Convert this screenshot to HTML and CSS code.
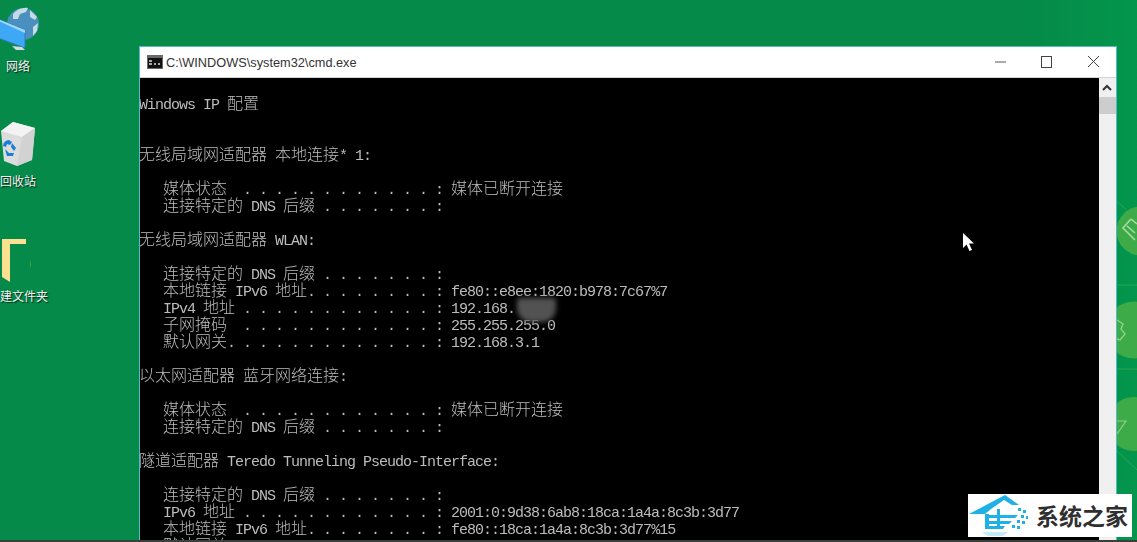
FILE: index.html
```html
<!DOCTYPE html>
<html lang="zh-CN">
<head>
<meta charset="utf-8">
<title>cmd.exe</title>
<link rel="stylesheet" href="styles.css">
</head>
<body>
<div class="desktop">
  <svg class="wallpaper" width="21" height="300" viewBox="1116 180 21 300">
    <path d="M1116 201l10 8M1116 285h21M1116 369h21M1116 450l21 20" stroke="#2fa552" stroke-width="1" fill="none"/>
    <circle cx="1141" cy="231" r="24.5" fill="#3dab48"/>
    <circle cx="1134" cy="330" r="28.5" fill="#3dab48"/>
    <circle cx="1134" cy="424" r="27" fill="#3dab48"/>
    <path d="M1131 219l-8 9 12 12M1131 219l6 5M1127 226l8 7" stroke="#a9dba2" stroke-width="1.6" fill="none"/>
    <path d="M1117 320l6 4-2 5 4 5-5 6-3-1" stroke="#8fd08a" stroke-width="1.4" fill="none"/>
    <path d="M1117 421h9l-9 13" stroke="#8fd08a" stroke-width="1.2" fill="none"/>
  </svg>

  <div class="desk-icon icon-network">
    <svg class="desk-glyph" width="80" height="46" viewBox="-22 6 80 46">
      <circle cx="23" cy="24" r="16" fill="#4a8fbd"/>
      <path d="M13 14c4-5 10-7 15-6l-2 4-6 2-2 5-5 0zM30 10l7 7-2 3-5-3zM33 27l5-4-1 8-4 5z" fill="#c5dbe6"/>
      <path d="M-6 19-2 19 25 30 25 48-2 38z" fill="#3ea8f7" stroke="#2b7bb4" stroke-width="1"/>
      <path d="M-6 19-2 19 25 30 25 33z" fill="#9fd6fa"/>
      <path d="M12 46l10 1 3 3H16z" fill="#d3dcde"/>
    </svg>
    <span class="desk-label">网络</span>
  </div>

  <div class="desk-icon icon-bin">
    <svg class="desk-glyph" width="80" height="46" viewBox="-22 121 80 46">
      <path d="M1 131 13 122 35 128 32 160 17 166 4 161z" fill="#dcdcdc"/>
      <path d="M1 131 13 122 35 128 22 137z" fill="#f3f3f3"/>
      <path d="M22 137 35 128 32 160 17 166z" fill="#d2d2d2"/>
      <path d="M3 146a6 6 0 0 1 6-6l3 2-2 3-3-1-1 3zM12 143l4 5-2 3-3-4zM5 149l4 4h5l-1 3H7z" fill="#1b7ed6"/>
    </svg>
    <span class="desk-label">回收站</span>
  </div>

  <div class="desk-icon icon-folder">
    <svg class="desk-glyph" width="80" height="46" viewBox="-22 238 80 46">
      <path d="M2 239H26V244H10V282L2 277z" fill="#fbe08f"/>
      <path d="M30 265l1-6v9z" fill="#4fae3c"/>
    </svg>
    <span class="desk-label">新建文件夹</span>
  </div>

  <section class="window">
    <header class="titlebar">
      <svg class="title-icon" width="16" height="14" viewBox="0 0 16 14">
        <rect width="16" height="14" fill="#6a6a6a"/>
        <rect x="1" y="3" width="14" height="10" fill="#111"/>
        <path d="M2 6h3M2 9h3M7 9h2M11 9h2" stroke="#ddd" stroke-width="1.4"/>
      </svg>
      <span class="title-text">C:\WINDOWS\system32\cmd.exe</span>
      <div class="controls">
        <svg width="47" height="32" viewBox="0 0 47 32"><path d="M20 16h11" stroke="#555" stroke-width="1"/></svg>
        <svg width="47" height="32" viewBox="0 0 47 32"><rect x="19.5" y="10.5" width="10" height="11" fill="none" stroke="#444" stroke-width="1"/></svg>
        <svg width="47" height="32" viewBox="0 0 47 32"><path d="M19 10l11 11M30 10 19 21" stroke="#444" stroke-width="1"/></svg>
      </div>
    </header>
    <div class="client">
      <div class="console">
        <div class="row"></div>
        <div class="row">Windows IP <span class="cjk">配置</span></div>
        <div class="row"></div>
        <div class="row"></div>
        <div class="row"><span class="cjk">无线局域网适配器</span> <span class="cjk">本地连接</span>* 1:</div>
        <div class="row"></div>
        <div class="row">   <span class="cjk">媒体状态</span>  . . . . . . . . . . . . : <span class="cjk">媒体已断开连接</span></div>
        <div class="row">   <span class="cjk">连接特定的</span> DNS <span class="cjk">后缀</span> . . . . . . . :</div>
        <div class="row"></div>
        <div class="row"><span class="cjk">无线局域网适配器</span> WLAN:</div>
        <div class="row"></div>
        <div class="row">   <span class="cjk">连接特定的</span> DNS <span class="cjk">后缀</span> . . . . . . . :</div>
        <div class="row">   <span class="cjk">本地链接</span> IPv6 <span class="cjk">地址</span>. . . . . . . . : fe80::e8ee:1820:b978:7c67%7</div>
        <div class="row">   IPv4 <span class="cjk">地址</span> . . . . . . . . . . . . : 192.168.</div>
        <div class="row">   <span class="cjk">子网掩码</span>  . . . . . . . . . . . . : 255.255.255.0</div>
        <div class="row">   <span class="cjk">默认网关</span>. . . . . . . . . . . . . : 192.168.3.1</div>
        <div class="row"></div>
        <div class="row"><span class="cjk">以太网适配器</span> <span class="cjk">蓝牙网络连接</span>:</div>
        <div class="row"></div>
        <div class="row">   <span class="cjk">媒体状态</span>  . . . . . . . . . . . . : <span class="cjk">媒体已断开连接</span></div>
        <div class="row">   <span class="cjk">连接特定的</span> DNS <span class="cjk">后缀</span> . . . . . . . :</div>
        <div class="row"></div>
        <div class="row"><span class="cjk">隧道适配器</span> Teredo Tunneling Pseudo-Interface:</div>
        <div class="row"></div>
        <div class="row">   <span class="cjk">连接特定的</span> DNS <span class="cjk">后缀</span> . . . . . . . :</div>
        <div class="row">   IPv6 <span class="cjk">地址</span> . . . . . . . . . . . . : 2001:0:9d38:6ab8:18ca:1a4a:8c3b:3d77</div>
        <div class="row">   <span class="cjk">本地链接</span> IPv6 <span class="cjk">地址</span>. . . . . . . . : fe80::18ca:1a4a:8c3b:3d77%15</div>
        <div class="row">   <span class="cjk">默认网关</span>. . . . . . . . . . . . . : ::</div>
      </div>
      <div class="scrollbar">
        <svg class="scroll-up" width="16" height="19" viewBox="0 0 16 19"><path d="M4 12l4-4 4 4" fill="none" stroke="#333" stroke-width="2"/></svg>
        <div class="thumb"></div>
      </div>
    </div>
  </section>

  <div class="smudge"></div>

  <svg class="cursor" width="14" height="20" viewBox="0 0 14 20">
    <path d="M1 1V16L4.5 12.5 7.5 19 10 18 7 11.5H12z" fill="#fff"/>
  </svg>

  <div class="watermark">
    <svg width="62" height="43" viewBox="0 0 62 43">
      <path d="M1 20 37 1 51 11H44L36 6 23 15 17 20z" fill="#1fb0e6"/>
      <path d="M17 20h4v15h-4zM29 15h3v20h-3z" fill="#1fb0e6"/>
      <path d="M21 21H50L47 24H21zM21 27H44L41 30H21zM21 32H37L35 35H21z" fill="#1fb0e6"/>
      <path d="M50 14h3v3h-3zM55 16h3v3h-3zM53 21h3v3h-3zM58 22h2v3h-2zM49 26h3v3h-3zM54 27h3v3h-3zM44 31h3v3h-3zM49 32h3v3h-3z" fill="#1fb0e6"/>
      <path d="M14 38h26l-5 4H20z" fill="#c4e9f7"/>
    </svg>
    <span class="mark-text">系统之家</span>
  </div>

  <div class="taskbar"></div>
</div>
</body>
</html>
```

FILE: styles.css
```css
* {
  box-sizing: border-box;
}

html,
body {
  margin: 0;
  height: 100%;
  overflow: hidden;
}

.desktop {
  position: relative;
  width: 1137px;
  height: 542px;
  overflow: hidden;
  background: linear-gradient(90deg, #058a49 0%, #058a49 90%, #03964c 100%);
  font-family: "Noto Sans CJK SC", "Noto Sans", sans-serif;
}

.wallpaper {
  position: absolute;
  left: 1116px;
  top: 180px;
  display: block;
}

.desk-icon {
  position: absolute;
  left: -22px;
  width: 80px;
  display: flex;
  flex-direction: column;
  align-items: center;
}

.icon-network {
  top: 6px;
}

.icon-bin {
  top: 121px;
}

.icon-folder {
  top: 238px;
}

.desk-glyph {
  display: block;
  filter: blur(0.4px);
}

.desk-label {
  margin-top: 6px;
  font-size: 12px;
  line-height: 16px;
  color: #f2f2f2;
  text-shadow: 1px 1px 1px rgba(0, 0, 0, 0.75);
  white-space: nowrap;
}

.icon-folder .desk-label {
  margin-top: 4px;
}

.window {
  position: absolute;
  left: 139px;
  top: 46px;
  width: 978px;
  height: 496px;
  display: flex;
  flex-direction: column;
  background: #fff;
  border: 1px solid #58b7c9;
  border-bottom: 0;
}

.titlebar {
  flex: none;
  display: flex;
  align-items: center;
  height: 31px;
  padding-left: 7px;
  background: #fff;
  border-bottom: 1px solid #d4d4d4;
}

.title-icon {
  flex: none;
}

.title-text {
  margin-left: 3px;
  font-family: "Liberation Sans", Arial, sans-serif;
  font-size: 12.75px;
  color: #333;
}

.controls {
  display: flex;
  margin-left: auto;
}

.controls svg {
  display: block;
}

.client {
  flex: 1;
  min-height: 0;
  display: flex;
}

.console {
  flex: 1;
  min-width: 0;
  overflow: hidden;
  background: #000;
  color: #bcbcbc;
  font-family: "Liberation Mono", "Courier New", monospace;
  font-size: 15px;
  letter-spacing: -1px;
  line-height: 17px;
  filter: blur(0.3px);
}

.row {
  height: 17px;
  margin-left: -1px;
  white-space: pre;
}

.row:first-child {
  margin-top: -1px;
}

.cjk {
  font-family: "Noto Sans CJK SC", sans-serif;
  font-size: 16px;
  font-weight: 300;
  letter-spacing: 0;
  line-height: 17px;
}

.scrollbar {
  flex: none;
  width: 17px;
  background: #f0f0f0;
}

.scroll-up {
  display: block;
}

.thumb {
  height: 17px;
  background: #cdcdcd;
}

.smudge {
  position: absolute;
  left: 517px;
  top: 298px;
  width: 39px;
  height: 24px;
  background: #525252;
  border-radius: 3px 3px 14px 14px;
  filter: blur(2.5px);
}

.cursor {
  position: absolute;
  left: 962px;
  top: 232px;
}

.watermark {
  position: absolute;
  left: 968px;
  top: 494px;
  width: 164px;
  height: 43px;
  display: flex;
  align-items: center;
  gap: 6px;
  background: #fff;
}

.mark-text {
  font-size: 23px;
  font-weight: 700;
  line-height: 43px;
  color: #2f2f2f;
  white-space: nowrap;
}

.taskbar {
  position: absolute;
  left: 0;
  right: 0;
  bottom: 0;
  height: 2px;
  background: #3b3f3c;
}
```
